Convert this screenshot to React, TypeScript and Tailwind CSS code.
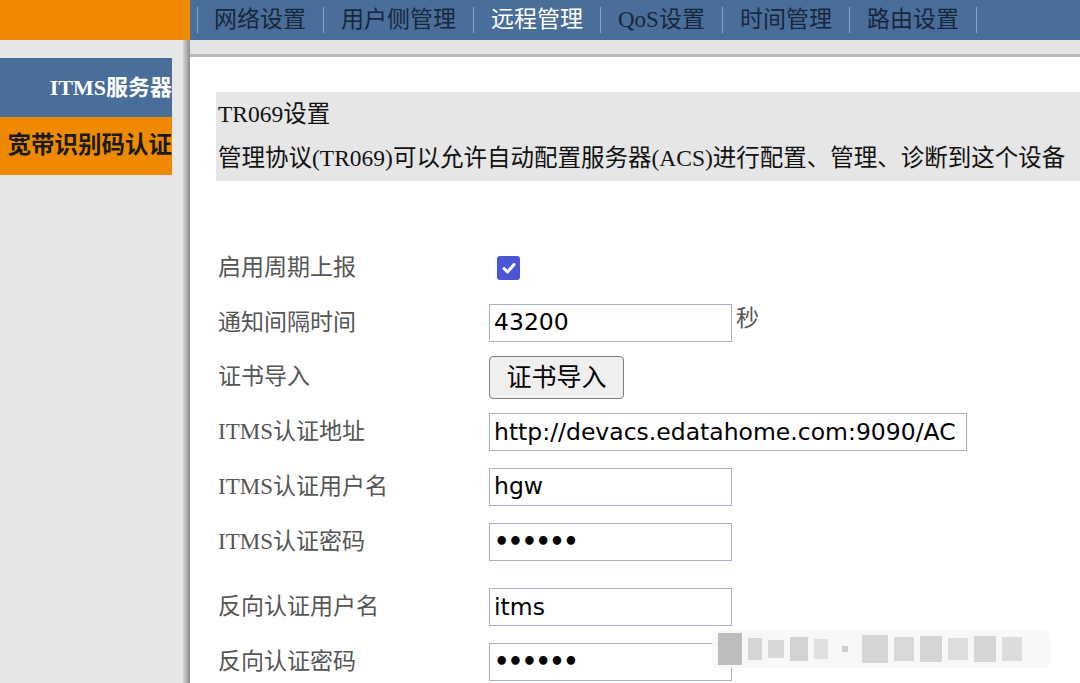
import React from "react";

const serif = "font-['Liberation_Serif','Noto_Sans_CJK_SC',serif]";
const sans = "font-['DejaVu_Sans','Noto_Sans_CJK_SC',sans-serif]";

const navItems = ["网络设置", "用户侧管理", "远程管理", "QoS设置", "时间管理", "路由设置"];

function Sep({ first }: { first?: boolean }) {
  return <span className={`w-px h-[26px] bg-[#8fa2bb] ${first ? "mr-[16px]" : "mx-[17px]"}`} />;
}

function TextInput({ value, wide, password }: { value: string; wide?: boolean; password?: boolean }) {
  return (
    <div
      className={`h-[38px] ${wide ? "w-[478px]" : "w-[243px]"} border border-[#a7b1c4] bg-white flex items-center pl-[4px] overflow-hidden whitespace-nowrap text-[23.5px] text-black ${sans}`}
    >
      {password ? <span className="text-[24px] font-bold leading-none tracking-[-1.5px]">••••••</span> : value}
    </div>
  );
}

function Row({ label, children, mt }: { label: string; children?: React.ReactNode; mt?: string }) {
  return (
    <div className={`flex items-center h-[54.7px] ${mt ?? ""}`}>
      <div className={`w-[273px] pl-[2px] text-[23px] text-[#555] whitespace-nowrap ${serif}`}>{label}</div>
      <div className="flex items-center">{children}</div>
    </div>
  );
}

export default function App() {
  return (
    <div className="w-[1080px] h-[683px] overflow-hidden flex flex-col bg-white relative">
      {/* top bar */}
      <div className="flex h-[40px] shrink-0">
        <div className="w-[190px] bg-[#ef8a00]" />
        <div className={`flex-1 bg-[#4a6e9a] flex items-center pl-[7px] text-[23px] text-[#18263a] whitespace-nowrap ${serif}`}>
          <Sep first />
          {navItems.map((n, i) => (
            <React.Fragment key={n}>
              <span className={i === 2 ? "text-white" : ""}>{n}</span>
              <Sep />
            </React.Fragment>
          ))}
        </div>
      </div>

      <div className="flex flex-1">
        {/* sidebar */}
        <div className="w-[183px] bg-[#e7e7e7] pt-[18px] shrink-0">
          <div className={`w-[172px] h-[59px] bg-[#4a6e9a] flex items-center justify-end text-white font-bold text-[22px] ${serif}`}>
            ITMS服务器
          </div>
          <div className={`w-[172px] h-[58px] bg-[#ef8a00] flex items-center justify-end text-[#1a1a1a] font-bold text-[23.5px] whitespace-nowrap overflow-hidden ${serif}`}>
            宽带识别码认证
          </div>
        </div>
        <div className="w-[7px] bg-gradient-to-r from-[#d4d4d4] via-[#b0b0b0] to-[#8c8c8c] shrink-0" />

        {/* main */}
        <div className="flex-1 flex flex-col min-w-0">
          <div className="h-[17px] bg-[#e3e3e3] border-b-[3px] border-[#b9b9b9]" />
          <div className="pl-[26px] pt-[35px]">
            <div className={`h-[89px] bg-[#e6e6e6] pl-[2px] flex flex-col justify-center gap-[19px] text-[23.5px] text-[#111] whitespace-nowrap overflow-hidden ${serif}`}>
              <div className="leading-[25px]">TR069设置</div>
              <div className="leading-[25px]">管理协议(TR069)可以允许自动配置服务器(ACS)进行配置、管理、诊断到这个设备</div>
            </div>

            <div className="mt-[60px]">
              <Row label="启用周期上报">
                <span className="ml-[8px] w-[23px] h-[24px] rounded-[3px] bg-[#4a56d6] flex items-center justify-center">
                  <svg width="16" height="16" viewBox="0 0 16 16">
                    <path d="M3 8.5 L6.5 12 L13 4.5" fill="none" stroke="white" strokeWidth="3" strokeLinecap="round" strokeLinejoin="round" />
                  </svg>
                </span>
              </Row>
              <Row label="通知间隔时间">
                <TextInput value="43200" />
                <span className={`ml-[4px] -mt-[8px] text-[23px] text-[#555] ${serif}`}>秒</span>
              </Row>
              <Row label="证书导入">
                <button className={`h-[43px] w-[135px] rounded-[4px] border border-[#808080] bg-[#efefef] text-[25px] text-black ${sans}`}>
                  证书导入
                </button>
              </Row>
              <Row label="ITMS认证地址">
                <TextInput value="http://devacs.edatahome.com:9090/AC" wide />
              </Row>
              <Row label="ITMS认证用户名">
                <TextInput value="hgw" />
              </Row>
              <Row label="ITMS认证密码">
                <TextInput value="" password />
              </Row>
              <Row label="反向认证用户名" mt="mt-[11px]">
                <TextInput value="itms" />
              </Row>
              <Row label="反向认证密码">
                <TextInput value="" password />
              </Row>
            </div>
          </div>
        </div>
      </div>

      {/* blurred watermark */}
      <div className="absolute left-[712px] top-[630px] w-[338px] h-[38px] rounded-[6px] bg-[#f7f7f7]/90 flex items-center gap-[6px] px-[6px]">
        <span className="w-[24px] h-[32px] bg-[#bdbdbd]" />
        <span className="w-[14px] h-[22px] bg-[#d6d6d6]" />
        <span className="w-[16px] h-[18px] bg-[#d8d8d8]" />
        <span className="w-[18px] h-[24px] bg-[#d2d2d2]" />
        <span className="w-[14px] h-[20px] bg-[#e0e0e0]" />
        <span className="w-[6px] h-[6px] bg-[#cfcfcf] mx-[8px]" />
        <span className="w-[26px] h-[28px] bg-[#d6d6d6]" />
        <span className="w-[20px] h-[24px] bg-[#d9d9d9]" />
        <span className="w-[22px] h-[26px] bg-[#d4d4d4]" />
        <span className="w-[20px] h-[22px] bg-[#dddddd]" />
        <span className="w-[22px] h-[26px] bg-[#d6d6d6]" />
        <span className="w-[20px] h-[24px] bg-[#dcdcdc]" />
      </div>
    </div>
  );
}
